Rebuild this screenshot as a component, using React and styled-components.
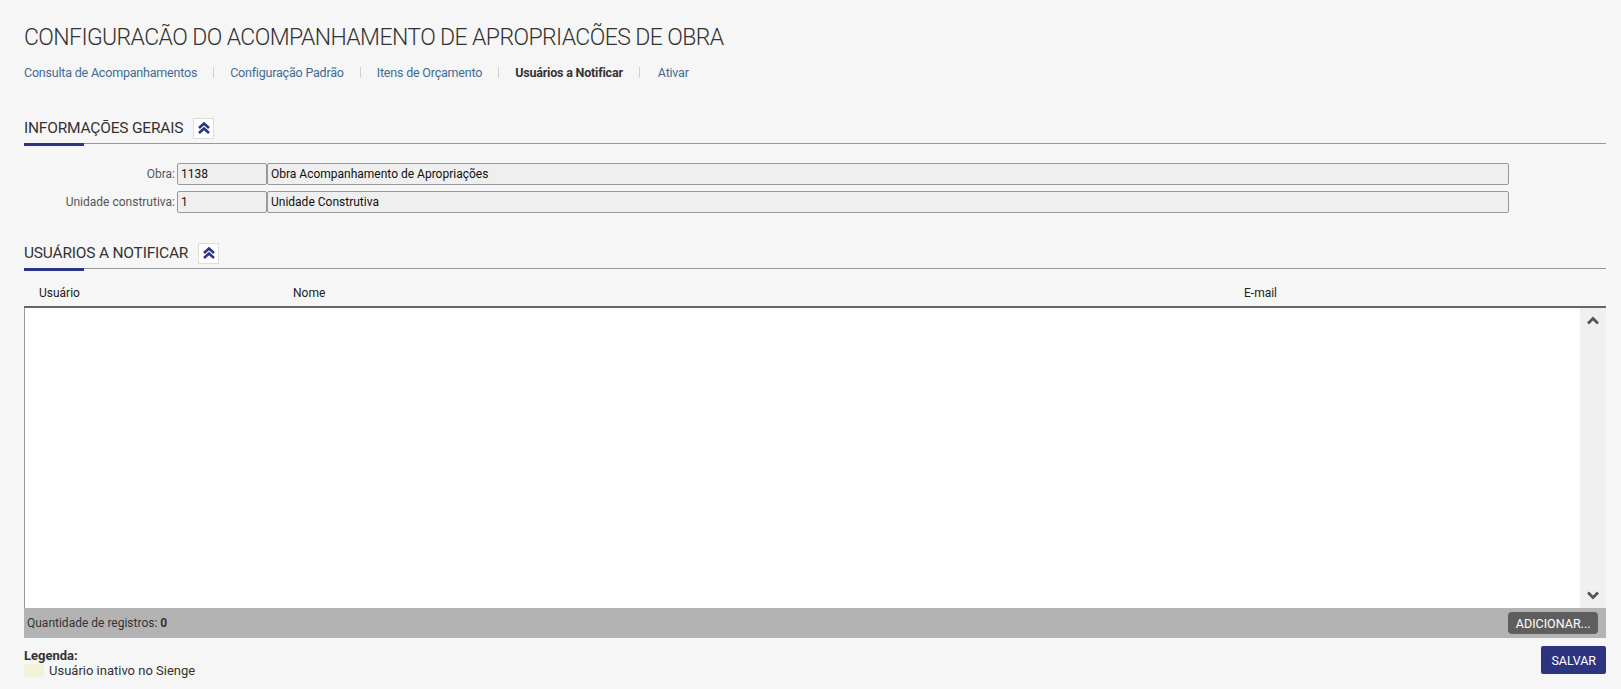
import styled, { createGlobalStyle } from "styled-components";

const GlobalStyle = createGlobalStyle`
  * { box-sizing: border-box; }
  body {
    margin: 0;
    background: #f6f6f6;
    font-family: Roboto, "Liberation Sans", sans-serif;
    color: #333;
  }
`;

const tabs = [
  { label: "Consulta de Acompanhamentos" },
  { label: "Configuração Padrão" },
  { label: "Itens de Orçamento" },
  { label: "Usuários a Notificar", active: true },
  { label: "Ativar" },
];

const columns = [
  { label: "Usuário", width: "254px" },
  { label: "Nome", width: "951px" },
  { label: "E-mail", width: "auto" },
];

function DoubleChevron() {
  return (
    <svg width="14" height="14" viewBox="0 0 14 14">
      <path d="M2 7 L7 2.5 L12 7" fill="none" stroke="#2c3487" strokeWidth="2.6" />
      <path d="M2 12 L7 7.5 L12 12" fill="none" stroke="#2c3487" strokeWidth="2.6" />
    </svg>
  );
}

function Chevron({ down }) {
  return (
    <svg width="14" height="10" viewBox="0 0 14 10">
      <path
        d={down ? "M2 2.5 L7 7.5 L12 2.5" : "M2 7.5 L7 2.5 L12 7.5"}
        fill="none"
        stroke="#555"
        strokeWidth="2.8"
      />
    </svg>
  );
}

function SectionHeader({ title }) {
  return (
    <SectionHead>
      <SectionTitle>{title}</SectionTitle>
      <CollapseButton>
        <DoubleChevron />
      </CollapseButton>
    </SectionHead>
  );
}

export default function App() {
  return (
    <Page>
      <GlobalStyle />
      <Title>CONFIGURACÃO DO ACOMPANHAMENTO DE APROPRIACÕES DE OBRA</Title>
      <TabList>
        {tabs.map((t, i) => (
          <TabItem key={t.label} $first={i === 0}>
            <Tab $active={t.active}>{t.label}</Tab>
          </TabItem>
        ))}
      </TabList>

      <SectionHeader title="INFORMAÇÕES GERAIS" />
      <Form>
        <FieldRow>
          <FieldLabel>Obra:</FieldLabel>
          <CodeInput>1138</CodeInput>
          <DescInput>Obra Acompanhamento de Apropriações</DescInput>
        </FieldRow>
        <FieldRow>
          <FieldLabel>Unidade construtiva:</FieldLabel>
          <CodeInput>1</CodeInput>
          <DescInput>Unidade Construtiva</DescInput>
        </FieldRow>
      </Form>

      <SectionHeader title="USUÁRIOS A NOTIFICAR" />
      <Table>
        <TableHead>
          {columns.map((c) => (
            <HeadCell key={c.label} style={{ width: c.width }}>
              {c.label}
            </HeadCell>
          ))}
        </TableHead>
        <TableBody>
          <BodyArea />
          <Scrollbar>
            <Chevron />
            <Chevron down />
          </Scrollbar>
        </TableBody>
        <TableFooter>
          <Count>
            Quantidade de registros: <b>0</b>
          </Count>
          <AddButton>ADICIONAR...</AddButton>
        </TableFooter>
      </Table>

      <Bottom>
        <Legend>
          <LegendTitle>Legenda:</LegendTitle>
          <LegendItem>
            <Swatch />
            Usuário inativo no Sienge
          </LegendItem>
        </Legend>
        <SaveButton>SALVAR</SaveButton>
      </Bottom>
    </Page>
  );
}

const Page = styled.div`
  padding: 23px 15px 0 24px;
`;

const Title = styled.h1`
  margin: 0;
  font-size: 23px;
  font-weight: 300;
  line-height: 30px;
  color: #333;
  letter-spacing: -0.6px;
  white-space: nowrap;
`;

const TabList = styled.ul`
  display: flex;
  list-style: none;
  margin: 10px 0 0;
  padding: 0;
  height: 18px;
  align-items: center;
`;

const TabItem = styled.li`
  display: flex;
  align-items: center;
  &::before {
    content: ${(p) => (p.$first ? "none" : '""')};
    width: 1px;
    height: 11px;
    background: #d0d0d0;
    margin: 0 16px;
  }
  &:last-child::before {
    margin-right: 18px;
  }
`;

const Tab = styled.a`
  font-size: 12.5px;
  letter-spacing: -0.2px;
  color: ${(p) => (p.$active ? "#333" : "#3f6b92")};
  font-weight: ${(p) => (p.$active ? 700 : 400)};
  cursor: pointer;
`;

const SectionHead = styled.div`
  display: flex;
  align-items: center;
  gap: 10px;
  height: 27px;
  margin-top: 36px;
  border-bottom: 1px solid #999;
  position: relative;
  padding-bottom: 4px;
  &::after {
    content: "";
    position: absolute;
    left: 0;
    bottom: -3px;
    width: 60px;
    height: 3px;
    background: #2c3487;
  }
`;

const SectionTitle = styled.h2`
  margin: 0;
  font-size: 15.5px;
  font-weight: 400;
  color: #333;
  letter-spacing: -0.2px;
`;

const CollapseButton = styled.button`
  width: 21px;
  height: 21px;
  padding: 0;
  border: 1px solid #ddd;
  background: #fff;
  display: flex;
  align-items: center;
  justify-content: center;
  cursor: pointer;
`;

const Form = styled.div`
  display: flex;
  flex-direction: column;
  gap: 6px;
  margin-top: 19px;
  margin-bottom: -7px;
`;

const FieldRow = styled.div`
  display: flex;
  align-items: center;
`;

const FieldLabel = styled.label`
  width: 153px;
  text-align: right;
  font-size: 12px;
  color: #555;
  padding-right: 2px;
`;

const Input = styled.div`
  height: 22px;
  border: 1px solid #999;
  border-radius: 2px;
  background: #efefef;
  font-size: 12px;
  color: #111;
  display: flex;
  align-items: center;
  padding: 0 3px;
`;

const CodeInput = styled(Input)`
  width: 90px;
`;

const DescInput = styled(Input)`
  width: 1242px;
`;

const Table = styled.div`
  margin-top: 0;
`;

const TableHead = styled.div`
  display: flex;
  height: 35px;
  align-items: flex-end;
  padding-bottom: 6px;
  border-bottom: 2px solid #666;
  margin-top: 4px;
`;

const HeadCell = styled.div`
  font-size: 12px;
  color: #222;
  padding-left: 15px;
  flex-shrink: 0;
`;

const TableBody = styled.div`
  display: flex;
  height: 300px;
  border-left: 1px solid #999;
`;

const BodyArea = styled.div`
  flex: 1;
  background: #fff;
`;

const Scrollbar = styled.div`
  width: 26px;
  background: #f0f0f0;
  display: flex;
  flex-direction: column;
  justify-content: space-between;
  align-items: center;
  padding: 8px 0 8px;
`;

const TableFooter = styled.div`
  height: 30px;
  background: #b3b3b3;
  display: flex;
  align-items: center;
  justify-content: space-between;
  padding: 0 8px 0 3px;
`;

const Count = styled.span`
  font-size: 12px;
  color: #333;
  b {
    font-weight: 700;
  }
`;

const AddButton = styled.button`
  height: 22px;
  padding: 0 7.5px;
  background: #5e5e5e;
  color: #fff;
  border: none;
  border-radius: 4px;
  font-family: Roboto, "Liberation Sans", sans-serif;
  font-size: 12.5px;
  cursor: pointer;
`;

const Bottom = styled.div`
  display: flex;
  justify-content: space-between;
  align-items: flex-start;
  margin-top: 8px;
`;

const Legend = styled.div`
  font-size: 13px;
  color: #333;
`;

const LegendTitle = styled.div`
  font-weight: 700;
  margin-top: 2px;
  line-height: 15px;
`;

const LegendItem = styled.div`
  display: flex;
  align-items: center;
  gap: 5px;
  line-height: 15px;
`;

const Swatch = styled.span`
  width: 20px;
  height: 13px;
  background: #f3f2d8;
`;

const SaveButton = styled.button`
  height: 28px;
  padding: 0 10px;
  background: #2c3482;
  color: #fff;
  border: none;
  border-radius: 2px;
  font-family: Roboto, "Liberation Sans", sans-serif;
  font-size: 12.5px;
  cursor: pointer;
`;
